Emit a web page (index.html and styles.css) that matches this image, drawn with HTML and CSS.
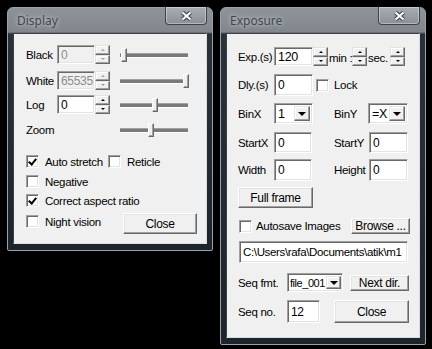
FILE: index.html
```html
<!DOCTYPE html>
<html>
<head>
<meta charset="UTF-8">
<title>Display / Exposure</title>
<link rel="stylesheet" href="styles.css">
</head>
<body>

<div class="desk">

	<!-- Display window -->
	<div class="win">
		<div class="titlebar">
			<span class="title">Display</span>
			<span class="xbtn">
				<svg width="13" height="10" viewBox="0 0 13 10"><path d="M2.5 1.5 L10.5 8.5 M10.5 1.5 L2.5 8.5" stroke="#3b4047" stroke-width="4.2"/><path d="M2.5 1.5 L10.5 8.5 M10.5 1.5 L2.5 8.5" stroke="#fff" stroke-width="2.2"/></svg>
			</span>
		</div>
		<div class="client c-display">
			<div class="row h19">
				<span class="lbl w31">Black</span>
				<span class="field dis w38">0</span>
				<span class="spin dis"><i class="up"></i><i class="dn"></i></span>
				<span class="slider"><b class="thumb" style="left:1px"></b></span>
			</div>
			<div class="row h19 mt7">
				<span class="lbl w31">White</span>
				<span class="field dis w38">65535</span>
				<span class="spin dis"><i class="up"></i><i class="dn"></i></span>
				<span class="slider"><b class="thumb" style="left:63px"></b></span>
			</div>
			<div class="row h19 mt5">
				<span class="lbl w31">Log</span>
				<span class="field w38">0</span>
				<span class="spin"><i class="up"></i><i class="dn"></i></span>
				<span class="slider"><b class="thumb" style="left:32px"></b></span>
			</div>
			<div class="row h17 mt7">
				<span class="lbl w31">Zoom</span>
				<span class="gap53"></span>
				<span class="slider"><b class="thumb" style="left:28px"></b></span>
			</div>

			<div class="row h13 mt17">
				<span class="chk on w82"><i class="box"></i>Auto stretch</span>
				<span class="chk"><i class="box"></i>Reticle</span>
			</div>
			<div class="row h13 mt7">
				<span class="chk"><i class="box"></i>Negative</span>
			</div>
			<div class="row h13 mt6">
				<span class="chk on"><i class="box"></i>Correct aspect ratio</span>
			</div>
			<div class="row row-top h21 mt6">
				<span class="chk w97 low"><i class="box"></i>Night vision</span>
				<span class="btn w74 h21">Close</span>
			</div>
		</div>
	</div>

	<!-- Exposure window -->
	<div class="win">
		<div class="titlebar">
			<span class="title">Exposure</span>
			<span class="xbtn">
				<svg width="13" height="10" viewBox="0 0 13 10"><path d="M2.5 1.5 L10.5 8.5 M10.5 1.5 L2.5 8.5" stroke="#3b4047" stroke-width="4.2"/><path d="M2.5 1.5 L10.5 8.5 M10.5 1.5 L2.5 8.5" stroke="#fff" stroke-width="2.2"/></svg>
			</span>
		</div>
		<div class="client c-exposure">
			<div class="row h19">
				<span class="lbl w36">Exp.(s)</span>
				<span class="field big w39">120</span>
				<span class="spin w16"><i class="up"></i><i class="dn"></i></span>
				<span class="txt w24">min :</span>
				<span class="spin w16"><i class="up"></i><i class="dn"></i></span>
				<span class="txt w23">sec.</span>
				<span class="spin w16"><i class="up"></i><i class="dn"></i></span>
			</div>
			<div class="row h22 mt8">
				<span class="lbl w36">Dly.(s)</span>
				<span class="field w39">0</span>
				<span class="chk ml3 lock"><i class="box"></i>Lock</span>
			</div>
			<div class="row h21 mt7">
				<span class="lbl w36">BinX</span>
				<span class="combo w39"><span class="val">1</span><i class="drop"></i></span>
				<span class="lbl ml21 w34">BinY</span>
				<span class="combo w40"><span class="val">=X</span><i class="drop"></i></span>
			</div>
			<div class="row h21 mt8">
				<span class="lbl w36">StartX</span>
				<span class="field w38">0</span>
				<span class="lbl ml22 w35">StartY</span>
				<span class="field w39">0</span>
			</div>
			<div class="row h22 mt6">
				<span class="lbl w36">Width</span>
				<span class="field w38">0</span>
				<span class="lbl ml22 w35">Height</span>
				<span class="field w39">0</span>
			</div>
			<div class="row h21 mt6">
				<span class="btn w75 h21">Full frame</span>
			</div>
			<div class="row h16 mt10">
				<span class="chk w112 ml1 tight"><i class="box"></i>Autosave Images</span>
				<span class="btn w59 h16">Browse ...</span>
			</div>
			<div class="row h22 mt7">
				<span class="field path ml1">C:\Users\rafa\Documents\atik\m1</span>
			</div>
			<div class="row h19 mt10">
				<span class="lbl w49">Seq fmt.</span>
				<span class="combo narrow w56"><span class="val small">file_001</span><i class="drop"></i></span>
				<span class="btn w59 h16 ml7">Next dir.</span>
			</div>
			<div class="row row-top h23 mt8">
				<span class="lbl w49 h22">Seq no.</span>
				<span class="field w33 h22">12</span>
				<span class="btn w75 h23 ml14">Close</span>
			</div>
		</div>
	</div>

</div>

</body>
</html>
```

FILE: styles.css
```css
*{
	box-sizing:border-box;
}
body{
	margin:0;
	background:#000;
	font-family:"Liberation Sans", Arial, sans-serif;
	font-size:11.5px;
	letter-spacing:-0.3px;
	color:#000;
}
.desk{
	display:flex; gap:7px;
	padding:7px 0 0 7px;
	align-items:flex-start;
}

/* window frame */
.win{
	width:206px;
	border:1px solid #9aa1a9;
	border-radius:6px 6px 2px 2px;
	background:linear-gradient(to bottom, #8e9399 0, #81878d 24px, #2a3139 26px, #1d242b 100%);
	padding:0 5px 6px;
}
.titlebar{
	height:25px;
	display:flex; justify-content:space-between;
}
.title{
	font-family:"Noto Sans", "Open Sans", sans-serif;
	font-size:12px;
	letter-spacing:0;
	color:#42474d;
	padding:4px 0 0 4px;
	text-shadow:0 0 5px rgba(235,238,240,.9);
}
.xbtn{
	width:42px; height:18px;
	margin-top:-1px;
	border:1px solid #3e444b; border-top:none;
	border-radius:0 0 4px 4px;
	background:linear-gradient(to bottom, #a9aeb4, #8a9097);
	box-shadow:inset 0 0 0 1px rgba(255,255,255,.35);
	display:flex; align-items:center; justify-content:center;
}

/* client area */
.client{
	background:#f0f0f0;
	border:1px solid;
	border-color:#3a4047 #d9dde1 #d9dde1 #3a4047;
}
.c-display{
	height:211px;
	padding:11px 0 0 12px;
}
.c-exposure{
	height:305px;
	padding:13px 0 0 11px;
}

/* rows */
.row{
	display:flex; align-items:center;
}
.row-top{ align-items:flex-start; }
.h13{height:13px;} .h16{height:16px;} .h17{height:17px;} .h19{height:19px;}
.h21{height:21px;} .h22{height:22px;} .h23{height:23px;}
.mt5{margin-top:5px;} .mt6{margin-top:6px;} .mt7{margin-top:7px;} .mt8{margin-top:8px;}
.mt10{margin-top:10px;} .mt17{margin-top:17px;}
.ml1{margin-left:1px;} .ml3{margin-left:3px;} .ml7{margin-left:7px;} .ml14{margin-left:14px;}
.ml21{margin-left:21px;} .ml22{margin-left:22px;}
.w16{width:16px;} .w23{width:23px;} .w24{width:24px;} .w31{width:31px;} .w33{width:33px;}
.w34{width:34px;} .w35{width:35px;} .w36{width:36px;} .w38{width:38px;} .w39{width:39px;}
.w40{width:40px;} .w49{width:49px;} .w56{width:56px;} .w59{width:59px;} .w74{width:74px;}
.w75{width:75px;} .w82{width:82px;} .w97{width:97px;} .w112{width:112px;}

.lbl{
	display:flex; align-items:center; height:100%;
	white-space:nowrap;
}
.txt{
	white-space:nowrap; padding-left:1px;
	align-self:flex-end; line-height:16px;
}
.gap53{ width:53px; }

/* sunken edit */
.field{
	height:100%;
	background:#fff;
	border:1px solid;
	border-color:#a0a0a0 #fff #fff #a0a0a0;
	box-shadow:inset 1px 1px #696969, inset -1px -1px #e3e3e3;
	padding:0 0 0 3px;
	display:flex; align-items:center;
	white-space:nowrap; overflow:hidden;
	font-size:12px;
}
.field.dis{
	background:#f0f0f0;
	color:#8d8d8d;
}
.field.big{ font-size:12.5px; }
.field.path{ width:169px; padding-left:3px; font-size:11.5px; letter-spacing:-0.35px; }

/* up-down buttons */
.spin{
	width:15px; height:100%;
	display:flex; flex-direction:column;
}
.spin i{
	flex:1;
	background:#f0f0f0;
	border:1px solid;
	border-color:#e3e3e3 #696969 #696969 #e3e3e3;
	box-shadow:inset -1px -1px #a0a0a0, inset 1px 1px #fff;
	display:flex; align-items:center; justify-content:center;
}
.spin i::after{
	content:"";
	border-left:2px solid transparent;
	border-right:2px solid transparent;
}
.spin .up::after{ border-bottom:2px solid #000; }
.spin .dn::after{ border-top:2px solid #000; }
.spin.dis .up::after{ border-bottom-color:#a0a0a0; }
.spin.dis .dn::after{ border-top-color:#a0a0a0; }

/* trackbar */
.slider{
	position:relative;
	width:68px; height:15px;
	margin-left:10px;
}
.slider::before{
	content:"";
	position:absolute; left:0; right:0; top:6px;
	height:3px;
	border-top:1px solid #a0a0a0;
	border-bottom:1px solid #fff;
	background:#7a7a7a;
}
.thumb{
	position:absolute; top:1px;
	width:6px; height:14px;
	background:#f0f0f0;
	border:1px solid;
	border-color:#fff #696969 #696969 #fff;
	box-shadow:inset -1px -1px #a0a0a0;
}

/* check box */
.chk{
	display:flex; align-items:center;
	white-space:nowrap;
}
.chk .box{
	width:13px; height:13px;
	margin-right:6px;
	background:#fff;
	border:1px solid;
	border-color:#a0a0a0 #fff #fff #a0a0a0;
	box-shadow:inset 1px 1px #696969, inset -1px -1px #e3e3e3;
	position:relative;
}
.chk.tight .box{ margin-right:4px; }
.chk.lock .box{ margin-right:5px; }
.chk.on .box::after{
	content:"";
	position:absolute; left:3px; top:1px;
	width:3px; height:6px;
	border-right:2px solid #000;
	border-bottom:2px solid #000;
	transform:rotate(40deg);
}
.chk.low{ margin-top:2px; }

/* combo box */
.combo{
	height:100%;
	display:flex;
	background:#fff;
	border:1px solid;
	border-color:#a0a0a0 #fff #fff #a0a0a0;
	box-shadow:inset 1px 1px #696969, inset -1px -1px #e3e3e3;
	padding:2px;
}
.combo.narrow{ padding:2px 1px 2px 2px; }
.combo .val{
	flex:1;
	padding-left:1px;
	display:flex; align-items:center;
	overflow:hidden; white-space:nowrap;
	font-size:12.5px;
}
.combo .val.small{ font-size:11px; letter-spacing:-0.45px; padding-left:0; }
.combo .drop{
	width:16px; flex:none;
	background:#f0f0f0;
	border:1px solid;
	border-color:#e3e3e3 #696969 #696969 #e3e3e3;
	box-shadow:inset -1px -1px #a0a0a0, inset 1px 1px #fff;
	display:flex; align-items:center; justify-content:center;
}
.combo.narrow .drop{ width:15px; }
.combo .drop::after{
	content:"";
	border-left:4px solid transparent;
	border-right:4px solid transparent;
	border-top:4px solid #000;
	margin-top:1px;
}

/* push button */
.btn{
	display:flex; align-items:center; justify-content:center;
	background:#f0f0f0;
	border:1px solid;
	border-color:#fff #696969 #696969 #fff;
	box-shadow:inset -1px -1px #a0a0a0, inset 1px 1px #e3e3e3;
	font-size:12px;
	white-space:nowrap;
}
```
